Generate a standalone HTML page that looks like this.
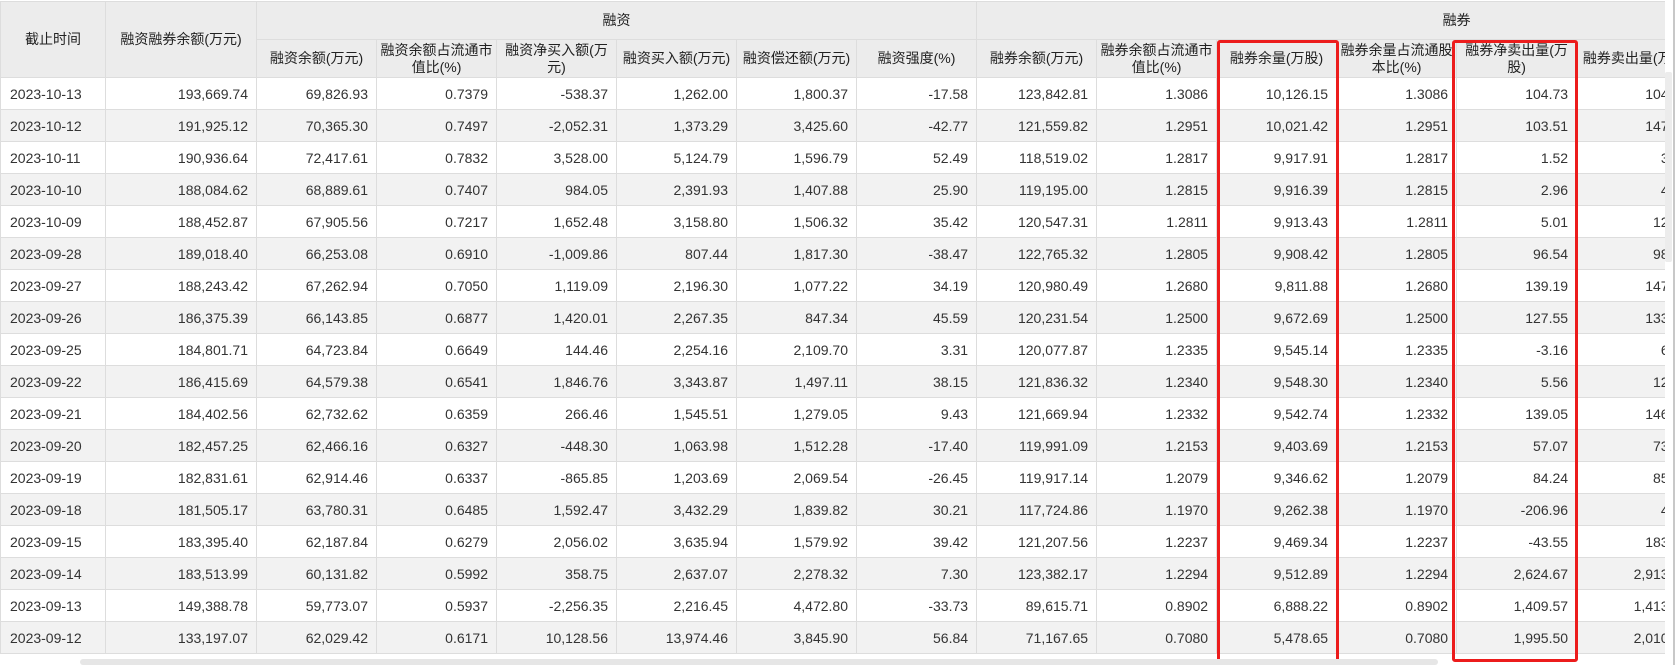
<!DOCTYPE html>
<html><head><meta charset="utf-8"><style>
html,body{margin:0;padding:0;background:#fff;width:1679px;height:665px;overflow:hidden}
body{font-family:"Liberation Sans","Noto Sans CJK SC",sans-serif;font-size:14px;color:#333;position:relative}
#wrap{position:absolute;left:0;top:0;width:1665px;height:655px;overflow:hidden}
table{border-collapse:collapse;table-layout:fixed;width:1936px;position:absolute;left:0;top:1px}
td,th{border:1px solid #ddd;padding:0 8px;white-space:nowrap;overflow:hidden}
th{background:#ececec;font-weight:normal;color:#222;text-align:center;line-height:17px;white-space:normal;padding:0 1px;font-size:14px}
tr.h th{height:37px}
td{height:31px;text-align:right;font-size:14px}
td.d{text-align:left;padding-left:9px}
tbody tr:nth-child(even) td{background:#f2f2f2}
.box{position:absolute;border:3px solid #ec1c1c;border-radius:3px;box-sizing:border-box}
#vs{position:absolute;left:1665px;top:0;width:14px;height:665px;background:#fff}
#vs .ln{position:absolute;left:8px;top:0;width:2px;height:665px;background:#c8c8c8}
#vs .th{position:absolute;left:0;top:72px;width:7px;height:190px;background:#ececec;border-radius:2px}
#hs{position:absolute;left:80px;top:659px;width:1358px;height:6px;background:#e6e6e6;border-radius:3px}
</style></head><body>
<div id="wrap">
<table>
<colgroup><col style="width:105px"><col style="width:151px"><col style="width:120px"><col style="width:120px"><col style="width:120px"><col style="width:120px"><col style="width:120px"><col style="width:120px"><col style="width:120px"><col style="width:120px"><col style="width:120px"><col style="width:120px"><col style="width:120px"><col style="width:120px"><col style="width:120px"><col style="width:120px"></colgroup>
<thead>
<tr class="h"><th rowspan="2">截止时间</th><th rowspan="2">融资融券余额(万元)</th><th colspan="6">融资</th><th colspan="8">融券</th></tr>
<tr class="h"><th>融资余额(万元)</th><th>融资余额占流通市值比(%)</th><th>融资净买入额(万元)</th><th>融资买入额(万元)</th><th>融资偿还额(万元)</th><th>融资强度(%)</th><th>融券余额(万元)</th><th>融券余额占流通市值比(%)</th><th>融券余量(万股)</th><th>融券余量占流通股本比(%)</th><th>融券净卖出量(万股)</th><th>融券卖出量(万股)</th><th>融券偿还量(万股)</th><th>融券强度(%)</th></tr>
</thead>
<tbody>
<tr><td class="d">2023-10-13</td><td>193,669.74</td><td>69,826.93</td><td>0.7379</td><td>-538.37</td><td>1,262.00</td><td>1,800.37</td><td>-17.58</td><td>123,842.81</td><td>1.3086</td><td>10,126.15</td><td>1.3086</td><td>104.73</td><td>104.73</td><td>0</td><td>0</td></tr>
<tr><td class="d">2023-10-12</td><td>191,925.12</td><td>70,365.30</td><td>0.7497</td><td>-2,052.31</td><td>1,373.29</td><td>3,425.60</td><td>-42.77</td><td>121,559.82</td><td>1.2951</td><td>10,021.42</td><td>1.2951</td><td>103.51</td><td>147.20</td><td>0</td><td>0</td></tr>
<tr><td class="d">2023-10-11</td><td>190,936.64</td><td>72,417.61</td><td>0.7832</td><td>3,528.00</td><td>5,124.79</td><td>1,596.79</td><td>52.49</td><td>118,519.02</td><td>1.2817</td><td>9,917.91</td><td>1.2817</td><td>1.52</td><td>3.51</td><td>0</td><td>0</td></tr>
<tr><td class="d">2023-10-10</td><td>188,084.62</td><td>68,889.61</td><td>0.7407</td><td>984.05</td><td>2,391.93</td><td>1,407.88</td><td>25.90</td><td>119,195.00</td><td>1.2815</td><td>9,916.39</td><td>1.2815</td><td>2.96</td><td>4.10</td><td>0</td><td>0</td></tr>
<tr><td class="d">2023-10-09</td><td>188,452.87</td><td>67,905.56</td><td>0.7217</td><td>1,652.48</td><td>3,158.80</td><td>1,506.32</td><td>35.42</td><td>120,547.31</td><td>1.2811</td><td>9,913.43</td><td>1.2811</td><td>5.01</td><td>12.05</td><td>0</td><td>0</td></tr>
<tr><td class="d">2023-09-28</td><td>189,018.40</td><td>66,253.08</td><td>0.6910</td><td>-1,009.86</td><td>807.44</td><td>1,817.30</td><td>-38.47</td><td>122,765.32</td><td>1.2805</td><td>9,908.42</td><td>1.2805</td><td>96.54</td><td>98.30</td><td>0</td><td>0</td></tr>
<tr><td class="d">2023-09-27</td><td>188,243.42</td><td>67,262.94</td><td>0.7050</td><td>1,119.09</td><td>2,196.30</td><td>1,077.22</td><td>34.19</td><td>120,980.49</td><td>1.2680</td><td>9,811.88</td><td>1.2680</td><td>139.19</td><td>147.80</td><td>0</td><td>0</td></tr>
<tr><td class="d">2023-09-26</td><td>186,375.39</td><td>66,143.85</td><td>0.6877</td><td>1,420.01</td><td>2,267.35</td><td>847.34</td><td>45.59</td><td>120,231.54</td><td>1.2500</td><td>9,672.69</td><td>1.2500</td><td>127.55</td><td>133.40</td><td>0</td><td>0</td></tr>
<tr><td class="d">2023-09-25</td><td>184,801.71</td><td>64,723.84</td><td>0.6649</td><td>144.46</td><td>2,254.16</td><td>2,109.70</td><td>3.31</td><td>120,077.87</td><td>1.2335</td><td>9,545.14</td><td>1.2335</td><td>-3.16</td><td>6.90</td><td>0</td><td>0</td></tr>
<tr><td class="d">2023-09-22</td><td>186,415.69</td><td>64,579.38</td><td>0.6541</td><td>1,846.76</td><td>3,343.87</td><td>1,497.11</td><td>38.15</td><td>121,836.32</td><td>1.2340</td><td>9,548.30</td><td>1.2340</td><td>5.56</td><td>12.40</td><td>0</td><td>0</td></tr>
<tr><td class="d">2023-09-21</td><td>184,402.56</td><td>62,732.62</td><td>0.6359</td><td>266.46</td><td>1,545.51</td><td>1,279.05</td><td>9.43</td><td>121,669.94</td><td>1.2332</td><td>9,542.74</td><td>1.2332</td><td>139.05</td><td>146.20</td><td>0</td><td>0</td></tr>
<tr><td class="d">2023-09-20</td><td>182,457.25</td><td>62,466.16</td><td>0.6327</td><td>-448.30</td><td>1,063.98</td><td>1,512.28</td><td>-17.40</td><td>119,991.09</td><td>1.2153</td><td>9,403.69</td><td>1.2153</td><td>57.07</td><td>73.40</td><td>0</td><td>0</td></tr>
<tr><td class="d">2023-09-19</td><td>182,831.61</td><td>62,914.46</td><td>0.6337</td><td>-865.85</td><td>1,203.69</td><td>2,069.54</td><td>-26.45</td><td>119,917.14</td><td>1.2079</td><td>9,346.62</td><td>1.2079</td><td>84.24</td><td>85.10</td><td>0</td><td>0</td></tr>
<tr><td class="d">2023-09-18</td><td>181,505.17</td><td>63,780.31</td><td>0.6485</td><td>1,592.47</td><td>3,432.29</td><td>1,839.82</td><td>30.21</td><td>117,724.86</td><td>1.1970</td><td>9,262.38</td><td>1.1970</td><td>-206.96</td><td>4.20</td><td>0</td><td>0</td></tr>
<tr><td class="d">2023-09-15</td><td>183,395.40</td><td>62,187.84</td><td>0.6279</td><td>2,056.02</td><td>3,635.94</td><td>1,579.92</td><td>39.42</td><td>121,207.56</td><td>1.2237</td><td>9,469.34</td><td>1.2237</td><td>-43.55</td><td>183.10</td><td>0</td><td>0</td></tr>
<tr><td class="d">2023-09-14</td><td>183,513.99</td><td>60,131.82</td><td>0.5992</td><td>358.75</td><td>2,637.07</td><td>2,278.32</td><td>7.30</td><td>123,382.17</td><td>1.2294</td><td>9,512.89</td><td>1.2294</td><td>2,624.67</td><td>2,913.20</td><td>0</td><td>0</td></tr>
<tr><td class="d">2023-09-13</td><td>149,388.78</td><td>59,773.07</td><td>0.5937</td><td>-2,256.35</td><td>2,216.45</td><td>4,472.80</td><td>-33.73</td><td>89,615.71</td><td>0.8902</td><td>6,888.22</td><td>0.8902</td><td>1,409.57</td><td>1,413.50</td><td>0</td><td>0</td></tr>
<tr><td class="d">2023-09-12</td><td>133,197.07</td><td>62,029.42</td><td>0.6171</td><td>10,128.56</td><td>13,974.46</td><td>3,845.90</td><td>56.84</td><td>71,167.65</td><td>0.7080</td><td>5,478.65</td><td>0.7080</td><td>1,995.50</td><td>2,010.30</td><td>0</td><td>0</td></tr>
</tbody>
</table>
</div>
<div class="box" style="left:1217px;top:40px;width:122px;height:625px"></div>
<div class="box" style="left:1452px;top:40px;width:126px;height:622px"></div>
<div id="vs"><div class="th"></div><div class="ln"></div></div>
<div id="hs"></div>
</body></html>
